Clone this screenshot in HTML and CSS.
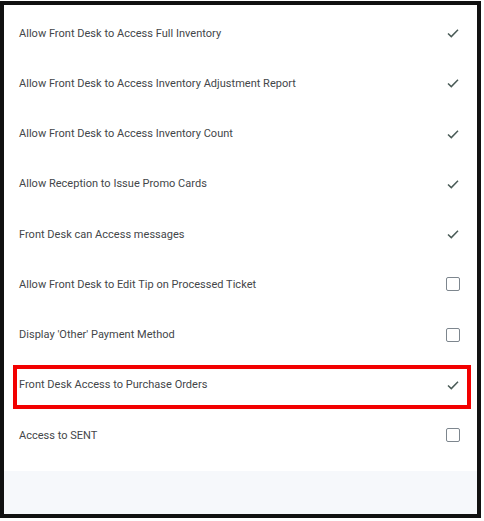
FILE: index.html
```html
<!DOCTYPE html>
<html lang="en">
<head>
    <meta charset="UTF-8">
    <meta name="viewport" content="width=device-width, initial-scale=1.0">
    <title>Front Desk Settings</title>
    <link rel="stylesheet" href="styles.css">
</head>
<body>
    <div class="frame">
        <div class="list">
            <div class="row">
                <span class="label">Allow Front Desk to Access Full Inventory</span>
                <svg class="check" viewBox="0 0 14 14"><path d="M2 7.5 L5.3 10.6 L12 3.8"/></svg>
            </div>
            <div class="row">
                <span class="label">Allow Front Desk to Access Inventory Adjustment Report</span>
                <svg class="check" viewBox="0 0 14 14"><path d="M2 7.5 L5.3 10.6 L12 3.8"/></svg>
            </div>
            <div class="row">
                <span class="label">Allow Front Desk to Access Inventory Count</span>
                <svg class="check" viewBox="0 0 14 14"><path d="M2 7.5 L5.3 10.6 L12 3.8"/></svg>
            </div>
            <div class="row">
                <span class="label">Allow Reception to Issue Promo Cards</span>
                <svg class="check" viewBox="0 0 14 14"><path d="M2 7.5 L5.3 10.6 L12 3.8"/></svg>
            </div>
            <div class="row">
                <span class="label">Front Desk can Access messages</span>
                <svg class="check" viewBox="0 0 14 14"><path d="M2 7.5 L5.3 10.6 L12 3.8"/></svg>
            </div>
            <div class="row">
                <span class="label">Allow Front Desk to Edit Tip on Processed Ticket</span>
                <span class="box"></span>
            </div>
            <div class="row">
                <span class="label">Display 'Other' Payment Method</span>
                <span class="box"></span>
            </div>
            <div class="row marked">
                <span class="label">Front Desk Access to Purchase Orders</span>
                <svg class="check" viewBox="0 0 14 14"><path d="M2 7.5 L5.3 10.6 L12 3.8"/></svg>
            </div>
            <div class="row">
                <span class="label">Access to SENT</span>
                <span class="box"></span>
            </div>
        </div>
        <div class="footer"></div>
    </div>
</body>
</html>
```

FILE: styles.css
```css
*{
    margin: 0;
    padding: 0;
    box-sizing: border-box;
}
body{
    background: #ffffff;
    font-family: Roboto, "Noto Sans", sans-serif;
}
.frame{
    margin: 1px 3px 0 0;
    height: 517px;
    border: 4px solid #111111;
    background: #ffffff;
    display: flex;
    flex-direction: column;
}
.list{
    padding-top: 3px;
    padding-bottom: 11px;
}
.row{
    position: relative;
    height: 50.25px;
    display: flex;
    align-items: center;
    justify-content: space-between;
    padding: 0 17px 0 15px;
}
.label{
    font-size: 11px;
    color: #434649;
    letter-spacing: 0.02px;
}
.check{
    width: 14px;
    height: 14px;
    fill: none;
    stroke: #4a5b57;
    stroke-width: 1.5;
}
.box{
    width: 14px;
    height: 14px;
    border: 1.5px solid #7d868e;
    border-radius: 2px;
}
.marked::after{
    content: "";
    position: absolute;
    left: 9px;
    right: 6px;
    top: 5px;
    bottom: 1px;
    border: 4px solid #f20000;
}
.footer{
    flex: 1;
    background: #f6f8fb;
}
```
